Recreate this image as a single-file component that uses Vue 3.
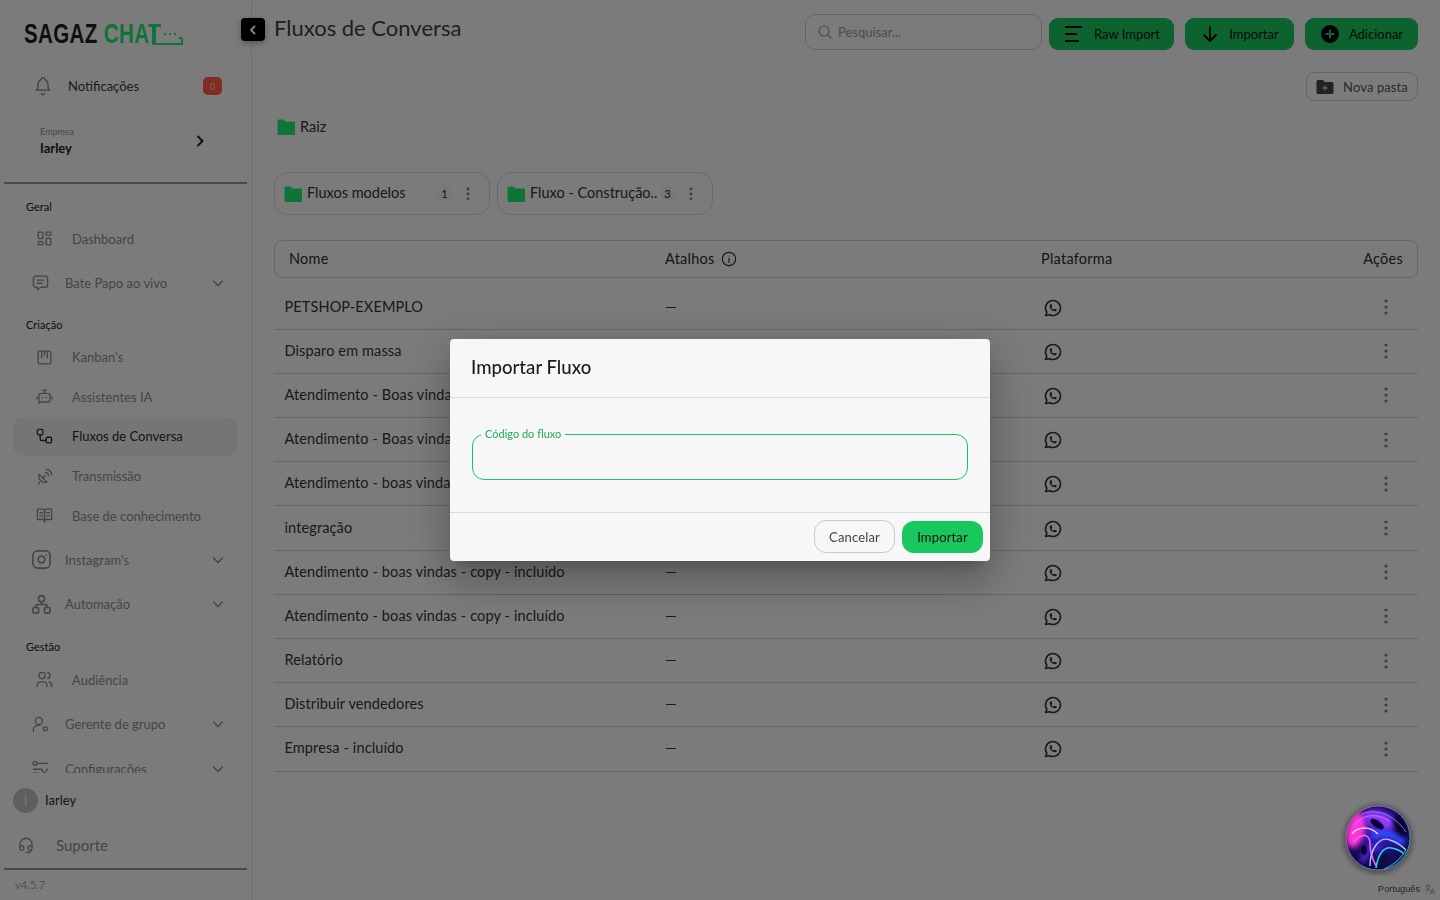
<script setup>
import { ref } from 'vue'

const ic = {
  dash: ['M5 4h4a1 1 0 0 1 1 1v6a1 1 0 0 1-1 1H5a1 1 0 0 1-1-1V5a1 1 0 0 1 1-1', 'M5 16h4a1 1 0 0 1 1 1v2a1 1 0 0 1-1 1H5a1 1 0 0 1-1-1v-2a1 1 0 0 1 1-1', 'M15 12h4a1 1 0 0 1 1 1v6a1 1 0 0 1-1 1h-4a1 1 0 0 1-1-1v-6a1 1 0 0 1 1-1', 'M15 4h4a1 1 0 0 1 1 1v2a1 1 0 0 1-1 1h-4a1 1 0 0 1-1-1V5a1 1 0 0 1 1-1'],
  chat: ['M8 9h8', 'M8 13h6', 'M18 4a3 3 0 0 1 3 3v8a3 3 0 0 1-3 3h-5l-5 3v-3H6a3 3 0 0 1-3-3V7a3 3 0 0 1 3-3h12z'],
  kanban: ['M6 4h12a2 2 0 0 1 2 2v12a2 2 0 0 1-2 2H6a2 2 0 0 1-2-2V6a2 2 0 0 1 2-2z', 'M8.5 4v8', 'M12 4v4.5', 'M15.5 4v8'],
  bot: ['M8 8h8a3 3 0 0 1 3 3v5a3 3 0 0 1-3 3H8l-3 1.5V11a3 3 0 0 1 3-3z', 'M12 8V4', 'M9.5 4h5', 'M2.5 13v2', 'M21.5 13v2', 'M9.5 13v.5', 'M14.5 13v.5'],
  flow: ['M5 3h3a2 2 0 0 1 2 2v3a2 2 0 0 1-2 2H5a2 2 0 0 1-2-2V5a2 2 0 0 1 2-2z', 'M16 13h3a2 2 0 0 1 2 2v3a2 2 0 0 1-2 2h-3a2 2 0 0 1-2-2v-3a2 2 0 0 1 2-2z', 'M6.5 10v5a2 2 0 0 0 2 2H14'],
  dish: ['M5 9a8 8 0 0 0 10 10z', 'M10 14l3-3', 'M13 7a4 4 0 0 1 4 4', 'M14 3a7 7 0 0 1 7 7', 'M6 19l-1.5 2.5'],
  book: ['M3 4h7a2 2 0 0 1 2 2v13a2 2 0 0 0-2-2H3z', 'M21 4h-7a2 2 0 0 0-2 2v13a2 2 0 0 1 2-2h7z', 'M6 8.5h3', 'M6 12.5h3', 'M15 8.5h3', 'M15 12.5h3', 'M12 19v2'],
  insta: ['M8 3h8a5 5 0 0 1 5 5v8a5 5 0 0 1-5 5H8a5 5 0 0 1-5-5V8a5 5 0 0 1 5-5z', 'M12 8.5a3.5 3.5 0 1 0 0 7a3.5 3.5 0 0 0 0-7z', 'M16.8 7.2v.01'],
  tree: ['M5 15h2a2 2 0 0 1 2 2v2a2 2 0 0 1-2 2H5a2 2 0 0 1-2-2v-2a2 2 0 0 1 2-2z', 'M17 15h2a2 2 0 0 1 2 2v2a2 2 0 0 1-2 2h-2a2 2 0 0 1-2-2v-2a2 2 0 0 1 2-2z', 'M11 3h2a2 2 0 0 1 2 2v2a2 2 0 0 1-2 2h-2a2 2 0 0 1-2-2V5a2 2 0 0 1 2-2z', 'M6 15v-1a2 2 0 0 1 2-2h8a2 2 0 0 1 2 2v1', 'M12 9v3'],
  users: ['M9 3a4 4 0 1 0 0 8a4 4 0 0 0 0-8z', 'M3 21v-2a4 4 0 0 1 4-4h4a4 4 0 0 1 4 4v2', 'M16 3.13a4 4 0 0 1 0 7.75', 'M21 21v-2a4 4 0 0 0-3-3.85'],
  manager: ['M10 3a4.5 4.5 0 1 0 0 9a4.5 4.5 0 0 0 0-9z', 'M3 21v-2a6 6 0 0 1 6-6h2', 'M18 15a2.5 2.5 0 1 0 0 5a2.5 2.5 0 0 0 0-5z'],
  sliders: ['M5 3a2.5 2.5 0 1 0 0 5a2.5 2.5 0 0 0 0-5z', 'M8 5.5h13', 'M3 13h10c2 0 2 5 4 5s2-5 4-5', 'M3 18h6']
}

const nav = [
  { label: 'Geral' },
  { name: 'Dashboard', icon: 'dash' },
  { name: 'Bate Papo ao vivo', icon: 'chat', group: true },
  { label: 'Criação' },
  { name: "Kanban's", icon: 'kanban' },
  { name: 'Assistentes IA', icon: 'bot' },
  { name: 'Fluxos de Conversa', icon: 'flow', active: true },
  { name: 'Transmissão', icon: 'dish' },
  { name: 'Base de conhecimento', icon: 'book' },
  { name: "Instagram's", icon: 'insta', group: true, big: true },
  { name: 'Automação', icon: 'tree', group: true, big: true },
  { label: 'Gestão', wide: true },
  { name: 'Audiência', icon: 'users' },
  { name: 'Gerente de grupo', icon: 'manager', group: true },
  { name: 'Configurações', icon: 'sliders', group: true }
]

const folders = [
  { name: 'Fluxos modelos', count: 1 },
  { name: 'Fluxo - Construção..', count: 3 }
]

const rows = ref([
  'PETSHOP-EXEMPLO',
  'Disparo em massa',
  'Atendimento - Boas vindas - incluído',
  'Atendimento - Boas vindas - copy',
  'Atendimento - boas vindas - novo',
  'integração',
  'Atendimento - boas vindas - copy - incluído',
  'Atendimento - boas vindas - copy - incluído',
  'Relatório',
  'Distribuir vendedores',
  'Empresa - incluído'
])
</script>

<template>
  <div class="app">
    <aside class="sidebar">
      <div class="logo">
        <span class="logo-text">SAGAZ <em>CHAT</em></span>
        <svg class="logo-tail" width="32" height="24" viewBox="0 0 32 24" fill="none" stroke="#1ee66c" stroke-width="2">
          <path d="M0 3h10" />
          <path d="M2 3v18h29v-6" />
          <path d="M31 15h-3" />
          <path d="M13 11h2M18 11h2M23 11h2" />
        </svg>
      </div>

      <div class="notif">
        <svg class="notif-icon" width="20" height="20" viewBox="0 0 24 24" fill="none" stroke="#7e7e7e" stroke-width="1.5" stroke-linecap="round" stroke-linejoin="round">
          <path d="M10 4a2 2 0 0 1 4 0a7 7 0 0 1 4 6v3a4 4 0 0 0 2 4H4a4 4 0 0 0 2-4v-3a7 7 0 0 1 4-6" />
          <path d="M10 20.5a2 2 0 0 0 4 0" />
        </svg>
        <span class="notif-text">Notificações</span>
        <span class="badge">0</span>
      </div>

      <div class="company">
        <div>
          <div class="company-label">Empresa</div>
          <div class="company-name">Iarley</div>
        </div>
        <svg width="14" height="14" viewBox="0 0 14 14" fill="none" stroke="#222" stroke-width="2" stroke-linecap="round" stroke-linejoin="round">
          <path d="M5 2.5l4.5 4.5L5 11.500" />
        </svg>
      </div>

      <div class="divider"></div>

      <nav class="nav">
        <template v-for="item in nav" :key="item.label || item.name">
          <div v-if="item.label" class="nav-label" :class="{ wide: item.wide }">{{ item.label }}</div>
          <div v-else class="nav-item" :class="{ group: item.group, active: item.active }">
            <svg class="nav-icon" :class="{ big: item.big }" viewBox="0 0 24 24" fill="none" stroke="currentColor" stroke-width="1.7" stroke-linecap="round" stroke-linejoin="round">
              <path v-for="d in ic[item.icon]" :key="d" :d="d" />
            </svg>
            <span>{{ item.name }}</span>
            <svg v-if="item.group" class="nav-caret" width="14" height="14" viewBox="0 0 14 14" fill="none" stroke="currentColor" stroke-width="1.4" stroke-linecap="round" stroke-linejoin="round">
              <path d="M2.500 5l4.500 4.500L11.500 5" />
            </svg>
          </div>
        </template>
      </nav>

      <div class="user">
        <span class="avatar">I</span>
        <span>Iarley</span>
      </div>

      <div class="support">
        <svg width="18" height="18" viewBox="0 0 24 24" fill="none" stroke="currentColor" stroke-width="1.7" stroke-linecap="round" stroke-linejoin="round">
          <path d="M4 15v-4a8 8 0 1 1 16 0v4" />
          <path d="M19 19c0 1.600-2.800 3-6 3" />
          <path d="M4 15a2 2 0 0 1 2-2h1a2 2 0 0 1 2 2v2a2 2 0 0 1-2 2H6a2 2 0 0 1-2-2z" />
          <path d="M15 15a2 2 0 0 1 2-2h1a2 2 0 0 1 2 2v2a2 2 0 0 1-2 2h-1a2 2 0 0 1-2-2z" />
        </svg>
        <span>Suporte</span>
      </div>

      <div class="divider"></div>
      <div class="version">v4.5.7</div>
    </aside>

    <main class="main">
      <button class="back">
        <svg width="12" height="12" viewBox="0 0 12 12" fill="none" stroke="#fff" stroke-width="2" stroke-linecap="round" stroke-linejoin="round">
          <path d="M7.500 2.500L4 6l3.500 3.500" />
        </svg>
      </button>

      <header class="topbar">
        <h1 class="title">Fluxos de Conversa</h1>
        <div class="search">
          <svg width="16" height="16" viewBox="0 0 24 24" fill="none" stroke="#8f8f8f" stroke-width="1.6" stroke-linecap="round">
            <circle cx="10.500" cy="10.500" r="7.500" />
            <path d="M16.500 16.500L21 21" />
          </svg>
          <span>Pesquisar...</span>
        </div>
        <button class="btn-green raw">
          <svg width="22" height="22" viewBox="0 0 22 22" fill="none" stroke="#000" stroke-width="1.8">
            <path d="M2 4h17M2 11h12M2 18h14" />
          </svg>
          Raw Import
        </button>
        <button class="btn-green imp">
          <svg width="20" height="20" viewBox="0 0 20 20" fill="none" stroke="#000" stroke-width="1.800" stroke-linecap="round" stroke-linejoin="round">
            <path d="M10 3v14M4 11l6 6 6-6" />
          </svg>
          Importar
        </button>
        <button class="btn-green add">
          <svg width="20" height="20" viewBox="0 0 20 20">
            <circle cx="10" cy="10" r="9" fill="#000" />
            <path d="M10 5.500v9M5.500 10h9" stroke="#18c65f" stroke-width="2" />
          </svg>
          Adicionar
        </button>
      </header>

      <div class="new-folder-row">
        <button class="new-folder">
          <svg width="18" height="16" viewBox="0 0 18 16">
            <path d="M2 1h5l2 2h7a1.500 1.500 0 0 1 1.500 1.500v9A1.500 1.500 0 0 1 16 15H2A1.500 1.500 0 0 1 .5 13.500v-11A1.500 1.500 0 0 1 2 1z" fill="#444" />
            <path d="M9 6.500v5M6.500 9h5" stroke="#bdbdbd" stroke-width="1.600" />
          </svg>
          Nova pasta
        </button>
      </div>

      <div class="crumb">
        <svg class="folder" width="18" height="16" viewBox="0 0 18 16">
          <path d="M1.500 .5h5l2 2H17a1 1 0 0 1 1 1V15a1 1 0 0 1-1 1H1.500a1 1 0 0 1-1-1V1.500a1 1 0 0 1 1-1z" fill="#1fe96f" />
        </svg>
        <span>Raiz</span>
      </div>

      <div class="folders">
        <div v-for="f in folders" :key="f.name" class="folder-card">
          <svg class="folder" width="18" height="16" viewBox="0 0 18 16">
            <path d="M1.500 .5h5l2 2H17a1 1 0 0 1 1 1V15a1 1 0 0 1-1 1H1.500a1 1 0 0 1-1-1V1.500a1 1 0 0 1 1-1z" fill="#1fe96f" />
          </svg>
          <span class="folder-name">{{ f.name }}</span>
          <span class="folder-count">{{ f.count }}</span>
          <svg class="dots-sm" width="4" height="14" viewBox="0 0 4 14" fill="#7e7e7e">
            <circle cx="2" cy="2" r="1.400" /><circle cx="2" cy="7" r="1.400" /><circle cx="2" cy="12" r="1.400" />
          </svg>
        </div>
      </div>

      <div class="thead">
        <span>Nome</span>
        <span class="th-atalhos">
          Atalhos
          <svg width="16" height="16" viewBox="0 0 24 24" fill="none" stroke="#333" stroke-width="1.800" stroke-linecap="round">
            <circle cx="12" cy="12" r="10" />
            <path d="M12 11v6M12 7.500v.01" />
          </svg>
        </span>
        <span>Plataforma</span>
        <span class="th-actions">Ações</span>
      </div>

      <div class="tbody">
        <div v-for="(name, i) in rows" :key="i" class="row">
          <span class="row-name">{{ name }}</span>
          <span class="row-dash">—</span>
          <svg class="wa" width="20" height="20" viewBox="0 0 24 24" fill="none" stroke="#333" stroke-width="1.900" stroke-linecap="round" stroke-linejoin="round">
            <path d="M3 21l1.650-3.800a9 9 0 1 1 3.400 2.900L3 21" />
            <path d="M9 10a.5.5 0 0 0 1 0V9a.5.5 0 0 0-1 0v1a5 5 0 0 0 5 5h1a.5.5 0 0 0 0-1h-1a.5.5 0 0 0 0 1" />
          </svg>
          <svg class="dots" width="4" height="16" viewBox="0 0 4 16" fill="#7e7e7e">
            <circle cx="2" cy="2" r="1.600" /><circle cx="2" cy="8" r="1.600" /><circle cx="2" cy="14" r="1.600" />
          </svg>
        </div>
      </div>
    </main>

    <div class="overlay">
      <div class="modal">
        <div class="modal-head"><span>Importar Fluxo</span></div>
        <div class="modal-body">
          <fieldset class="field">
            <legend>Código do fluxo</legend>
          </fieldset>
        </div>
        <div class="modal-foot">
          <button class="btn-cancel">Cancelar</button>
          <button class="btn-import">Importar</button>
        </div>
      </div>
    </div>

    <div class="orb">
      <svg width="76" height="76" viewBox="0 0 76 76" fill="none">
        <defs>
          <radialGradient id="orbBase" cx="50%" cy="40%" r="65%">
            <stop offset="0%" stop-color="#4420d8" />
            <stop offset="60%" stop-color="#1c0d6a" />
            <stop offset="100%" stop-color="#07082a" />
          </radialGradient>
          <linearGradient id="orbRim" x1="0" y1="0" x2="1" y2="1">
            <stop offset="0%" stop-color="#ff7fe6" />
            <stop offset="50%" stop-color="#9a7dff" />
            <stop offset="100%" stop-color="#3fe3f5" />
          </linearGradient>
          <clipPath id="orbClip"><circle cx="38" cy="38" r="32" /></clipPath>
          <filter id="orbSoft" x="-30%" y="-30%" width="160%" height="160%"><feGaussianBlur stdDeviation="2.500" /></filter>
          <filter id="orbGlow" x="-30%" y="-30%" width="160%" height="160%"><feGaussianBlur stdDeviation=".6" /></filter>
        </defs>
        <circle cx="38" cy="39" r="35" fill="#000" opacity=".35" filter="url(#orbSoft)" />
        <circle cx="38" cy="38" r="32" fill="url(#orbBase)" />
        <g clip-path="url(#orbClip)">
          <ellipse cx="16" cy="30" rx="9" ry="18" fill="#ff35d6" transform="rotate(15 16 30)" filter="url(#orbSoft)" />
          <ellipse cx="40" cy="20" rx="17" ry="8" fill="#8a3cff" transform="rotate(20 40 20)" filter="url(#orbSoft)" />
          <path d="M32 36C44 30 56 34 64 44" stroke="#2d4bff" stroke-width="7" filter="url(#orbSoft)" />
          <path d="M22 62C28 46 34 44 40 50" stroke="#4a28d0" stroke-width="6" filter="url(#orbSoft)" />
          <ellipse cx="37" cy="24" rx="8" ry="3.500" fill="#0c0430" transform="rotate(35 37 24)" filter="url(#orbGlow)" />
          <ellipse cx="60" cy="26" rx="6" ry="11" fill="#05061f" opacity=".85" transform="rotate(-25 60 26)" filter="url(#orbSoft)" />
          <ellipse cx="24" cy="50" rx="3" ry="5" fill="#0a0530" filter="url(#orbGlow)" />
          <ellipse cx="42" cy="60" rx="8" ry="4" fill="#0a0c3a" opacity=".8" transform="rotate(-30 42 60)" filter="url(#orbGlow)" />
          <path d="M12 34C18 26 30 26 38 34" stroke="#ffc0f7" stroke-width="1.300" filter="url(#orbGlow)" />
          <path d="M14 26C22 14 38 12 50 22" stroke="#d65cff" stroke-width="1.100" filter="url(#orbGlow)" />
          <path d="M14 42C22 32 30 34 30 44C30 52 33 60 36 66" stroke="#f060f5" stroke-width="1.600" filter="url(#orbGlow)" />
          <path d="M30 66C30 48 40 36 50 40C56 42 62 46 66 50" stroke="#a8c8ff" stroke-width="1.400" filter="url(#orbGlow)" />
          <path d="M36 68C38 54 44 46 52 48C57 49 60 50 64 54" stroke="#24d5f2" stroke-width="1.500" filter="url(#orbGlow)" />
          <path d="M44 69C52 66 60 60 66 50" stroke="#1a9fe0" stroke-width="1.200" />
          <path d="M22 14C36 8 54 14 66 32" stroke="#b08bff" stroke-width=".8" />
        </g>
        <circle cx="38" cy="38" r="32" stroke="url(#orbRim)" stroke-opacity=".7" stroke-width=".9" />
      </svg>
    </div>

    <div class="lang">
      <span>Português</span>
      <svg width="12" height="12" viewBox="0 0 24 24" fill="none" stroke="#555" stroke-width="2.200">
        <path d="M2 6h12M8 2v4M12 6c-1 5-4 8-9 10M5 9c1 3 4 5 7 6" />
        <path d="M13 22l4-10 4 10M14.500 19h5" />
      </svg>
    </div>
  </div>
</template>

<style>
html, body {
  margin: 0;
  background: #f7f7f7;
}
</style>

<style scoped>
.app {
  display: flex;
  height: 100vh;
  overflow: hidden;
  font-family: Lato, "Noto Sans", sans-serif;
  color: #3e3e3e;
  background: #f7f7f7;
}

button {
  font-family: inherit;
  cursor: pointer;
}

.sidebar {
  width: 251px;
  flex-shrink: 0;
  border-right: 1px solid #dcdcdc;
  display: flex;
  flex-direction: column;
  box-sizing: content-box;
}

.logo {
  height: 66px;
  padding: 20px 0 0 24px;
  box-sizing: border-box;
  display: flex;
  align-items: flex-start;
}

.logo-text {
  font-family: "Liberation Sans", sans-serif;
  font-size: 27px;
  line-height: 28px;
  font-weight: 700;
  color: #1c1c1c;
  transform: scaleX(0.76);
  transform-origin: left top;
  white-space: nowrap;
  width: 127px;
  letter-spacing: 0.5px;
}

.logo-text em {
  font-style: normal;
  color: #1ee66c;
}

.logo-tail {
  margin: 3px 0 0 0;
}

.notif {
  display: flex;
  align-items: center;
  height: 40px;
  padding: 0 29px 0 33px;
  font-size: 13px;
  color: #3a3a3a;
}

.notif-icon {
  margin-right: 15px;
}

.badge {
  margin-left: auto;
  width: 19px;
  height: 18px;
  border-radius: 5px;
  background: #fe5a45;
  color: #ffc9a8;
  font-size: 9px;
  display: flex;
  align-items: center;
  justify-content: center;
}

.company {
  height: 76px;
  padding: 0 44px 7px 40px;
  display: flex;
  align-items: center;
  justify-content: space-between;
  box-sizing: border-box;
}

.company-label {
  font-size: 9px;
  line-height: 11px;
  color: #919191;
}

.company-name {
  font-size: 13px;
  font-weight: 700;
  color: #222;
  margin-top: 3px;
}

.divider {
  height: 2px;
  margin: 0 4px;
  background: #949494;
  flex-shrink: 0;
}

.nav {
  flex: 1;
  min-height: 0;
  overflow: hidden;
  padding-top: 12px;
}

.nav-label {
  height: 22px;
  line-height: 21px;
  padding-left: 26px;
  font-size: 11px;
  color: #222;
  margin-bottom: 1px;
}

.nav-label.wide {
  margin-bottom: 2.500px;
}

.nav-item + .nav-label {
  margin-top: 9px;
}

.nav-item {
  display: flex;
  align-items: center;
  height: 39.700px;
  margin: 0 14px 0 13px;
  padding-left: 21.500px;
  border-radius: 10px;
  font-size: 13px;
  color: #8b8b8b;
}

.nav-item span {
  margin-left: 18.500px;
}

.nav-item.group {
  height: 44.500px;
  padding-left: 17.500px;
}

.nav-item.group span {
  margin-left: 15.500px;
}

.nav-item:not(.group) + .nav-item.group {
  margin-top: 2px;
}

.nav-item.active {
  background: #ebebeb;
  color: #2a2a2a;
}

.nav-icon {
  width: 19px;
  height: 19px;
  flex-shrink: 0;
}

.nav-icon.big {
  width: 23px;
  height: 23px;
  margin-left: -1px;
  margin-right: -3px;
}

.nav-caret {
  margin-left: auto;
  margin-right: 12px;
  color: #8b8b8b;
}

.user {
  display: flex;
  align-items: center;
  gap: 7px;
  height: 54px;
  flex-shrink: 0;
  padding-left: 13px;
  font-size: 13px;
  color: #2a2a2a;
}

.avatar {
  width: 25px;
  height: 25px;
  border-radius: 50%;
  background: #bdbdbd;
  color: #e8e8e8;
  font-size: 15px;
  display: flex;
  align-items: center;
  justify-content: center;
}

.support {
  display: flex;
  align-items: center;
  gap: 21px;
  height: 41px;
  flex-shrink: 0;
  padding: 0 0 6px 17px;
  box-sizing: border-box;
  font-size: 15px;
  color: #8b8b8b;
}

.version {
  height: 30px;
  line-height: 30px;
  flex-shrink: 0;
  padding-left: 15px;
  font-size: 11px;
  color: #a5a5a5;
}

.main {
  flex: 1;
  min-width: 0;
  position: relative;
  padding: 14px 22px 0;
}

.back {
  position: absolute;
  left: -11px;
  top: 18px;
  width: 24px;
  height: 23px;
  padding: 0;
  border: 0;
  border-radius: 4px;
  background: #000;
  display: flex;
  align-items: center;
  justify-content: center;
  box-shadow: 0 2px 6px rgba(0, 0, 0, 0.3);
}

.topbar {
  display: flex;
  align-items: flex-start;
  height: 36px;
}

.title {
  margin: 0 auto 0 0;
  font-size: 22px;
  line-height: 28px;
  font-weight: 400;
  color: #3e3e3e;
}

.search {
  width: 237px;
  height: 36px;
  box-sizing: border-box;
  border: 1px solid #c8c8c8;
  border-radius: 10px;
  display: flex;
  align-items: center;
  gap: 5px;
  padding-left: 11px;
  font-size: 13px;
  color: #9a9a9a;
}

.btn-green {
  height: 32px;
  margin-top: 4px;
  border: 0;
  border-radius: 9px;
  background: #18c65f;
  color: #111;
  font-size: 13px;
  display: flex;
  align-items: center;
  justify-content: center;
  padding: 0;
}

.raw {
  width: 125px;
  margin-left: 7px;
  gap: 9px;
}

.imp {
  width: 109px;
  margin-left: 11px;
  gap: 9px;
}

.add {
  width: 113px;
  margin-left: 11px;
  gap: 9px;
}

.new-folder-row {
  display: flex;
  justify-content: flex-end;
  margin-top: 22px;
}

.new-folder {
  width: 112px;
  height: 29px;
  border: 1px solid #c8c8c8;
  border-radius: 9px;
  background: transparent;
  color: #555;
  font-size: 13px;
  letter-spacing: 0.1px;
  display: flex;
  align-items: center;
  justify-content: center;
  gap: 9px;
  padding: 0;
}

.crumb {
  display: flex;
  align-items: center;
  gap: 5px;
  height: 20px;
  margin: 16px 0 0 3px;
  font-size: 14.500px;
  color: #333;
}

.crumb span {
  padding-bottom: 2px;
}

.folders {
  display: flex;
  gap: 7px;
  margin-top: 35px;
}

.folder-card {
  width: 216px;
  height: 43px;
  box-sizing: border-box;
  border: 1px solid #d4d4d4;
  border-radius: 14px;
  display: flex;
  align-items: center;
  padding: 0 19px 0 9px;
  font-size: 14.500px;
  color: #333;
}

.folder-name {
  margin-left: 5px;
  flex: 1;
  white-space: nowrap;
  padding-bottom: 2px;
}

.folder-count {
  width: 15px;
  height: 15px;
  border-radius: 50%;
  background: #efefef;
  font-size: 11px;
  display: flex;
  align-items: center;
  justify-content: center;
  margin-right: 14px;
  color: #222;
}

.thead {
  display: grid;
  grid-template-columns: 376px 376px 1fr auto;
  align-items: center;
  height: 38px;
  box-sizing: border-box;
  margin-top: 25px;
  padding: 0 14px;
  border: 1px solid #cacad6;
  border-radius: 8px;
  font-size: 14.500px;
  letter-spacing: 0.25px;
  color: #2b2b2b;
}

.thead span {
  padding-bottom: 2px;
}

.th-atalhos {
  display: flex;
  align-items: center;
  gap: 6px;
}

.th-atalhos svg {
  margin-top: 2px;
}

.tbody {
  margin-top: 7.500px;
}

.row {
  display: grid;
  grid-template-columns: 380.500px 376px 1fr auto;
  align-items: center;
  height: 44.200px;
  box-sizing: border-box;
  padding: 0 30px 0 10.500px;
  border-bottom: 1px solid #cccccc;
  font-size: 14.500px;
  letter-spacing: 0.12px;
  color: #333;
}

.row-name,
.row-dash {
  padding-bottom: 2px;
}

.wa {
  margin: 1px 0 0 2px;
}

.overlay {
  position: fixed;
  inset: 0;
  background: rgba(0, 0, 0, 0.5);
  display: flex;
  align-items: center;
  justify-content: center;
}

.modal {
  width: 540px;
  height: 222px;
  background: #f7f7f7;
  border-radius: 4px;
  display: flex;
  flex-direction: column;
  box-shadow: 0 11px 15px -7px rgba(0, 0, 0, 0.2), 0 24px 38px 3px rgba(0, 0, 0, 0.14), 0 9px 46px 8px rgba(0, 0, 0, 0.12);
}

.modal-head {
  height: 59px;
  box-sizing: border-box;
  padding-left: 21px;
  display: flex;
  align-items: center;
  border-bottom: 1px solid #dcdce0;
  font-size: 18.600px;
  font-weight: 500;
  color: #1c1c1f;
}

.modal-head span {
  padding-bottom: 2px;
}

.modal-body {
  flex: 1;
  padding: 30px 22px 0;
}

.field {
  margin: 0;
  padding: 0 7px;
  height: 52px;
  box-sizing: border-box;
  border: 1px solid #18c75e;
  border-radius: 12px;
}

.field legend {
  margin-left: 1px;
  padding: 0 4px;
  font-size: 11px;
  line-height: 12px;
  color: #27a85c;
}

.modal-foot {
  height: 49px;
  box-sizing: border-box;
  border-top: 1px solid #dcdce0;
  display: flex;
  align-items: flex-start;
  justify-content: flex-end;
  gap: 7px;
  padding: 7px 7px 0 0;
}

.btn-cancel,
.btn-import {
  width: 81px;
  height: 33px;
  border-radius: 12px;
  font-size: 13px;
  letter-spacing: 0.15px;
  padding: 0;
}

.btn-cancel {
  background: transparent;
  border: 1px solid #c4c8d0;
  color: #444;
}

.btn-import {
  background: #18c75e;
  border: 0;
  color: #111;
  height: 32px;
  margin-top: 1px;
}

.orb {
  position: fixed;
  left: 1340px;
  top: 800px;
  width: 76px;
  height: 76px;
}

.lang {
  position: fixed;
  right: 4px;
  bottom: 5px;
  display: flex;
  align-items: center;
  gap: 4px;
  font-family: "Liberation Sans", sans-serif;
  font-size: 9.200px;
  color: #222;
}
</style>
